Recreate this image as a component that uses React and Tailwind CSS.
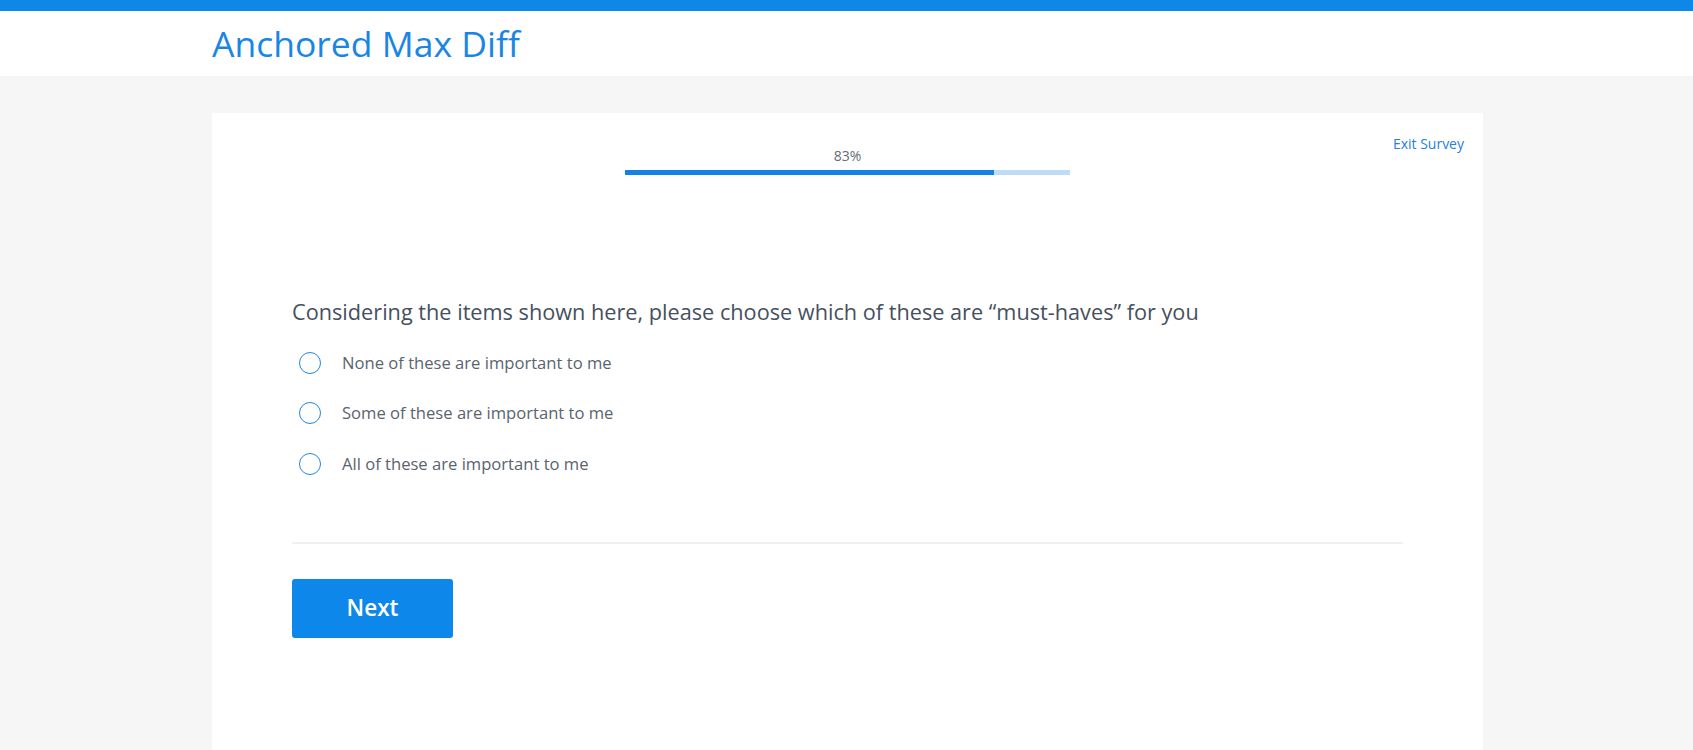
export default function App() {
  const options = [
    "None of these are important to me",
    "Some of these are important to me",
    "All of these are important to me",
  ];
  const progress = 83;

  return (
    <div className="min-h-screen bg-[#f6f6f6] font-['Open_Sans',sans-serif]">
      <div className="h-[11px] bg-[#0d88e9]" />
      <header className="bg-white h-[65px] flex items-center">
        <div className="w-[1271px] ml-[212px]">
          <h1 className="text-[35.5px] leading-none text-[#1a86e4]">Anchored Max Diff</h1>
        </div>
      </header>

      <main className="w-[1271px] ml-[212px] mt-[37px] bg-white min-h-[700px] pt-[18px]">
        <div className="grid grid-cols-[1fr_445px_1fr] px-[19px]">
          <div />
          <div className="pt-[15px]">
            <div className="text-center text-[14px] leading-[20px] text-[#646d79]">{progress}%</div>
            <div className="mt-[4px] h-[5px] bg-[#bfdcf6]">
              <div className="h-full bg-[#1282e6]" style={{ width: `${progress}%` }} />
            </div>
          </div>
          <div className="text-right">
            <a href="#" className="text-[14px] leading-[20px] text-[#1f80df]">Exit Survey</a>
          </div>
        </div>

        <div className="px-[80px] pt-[123px]">
          <h2 className="text-[21.7px] leading-[28px] text-[#46505e]">
            Considering the items shown here, please choose which of these are “must-haves” for you
          </h2>
          <div className="mt-[24.5px] flex flex-col gap-[26.5px]">
            {options.map((o) => (
              <label key={o} className="flex items-center h-[24px] cursor-pointer">
                <span className="ml-[7px] w-[22px] h-[22px] rounded-full border-[1.5px] border-[#2386e2] bg-white" />
                <span className="ml-[21px] text-[16.6px] leading-[24px] text-[#5b636f]">{o}</span>
              </label>
            ))}
          </div>

          <div className="mt-[66px] h-[2px] bg-[#f0f0f0]" />

          <button className="mt-[35px] w-[161px] h-[59px] rounded-[3px] bg-[#0d87e9] text-white text-[22.5px] font-semibold">
            Next
          </button>
        </div>
      </main>
    </div>
  );
}
